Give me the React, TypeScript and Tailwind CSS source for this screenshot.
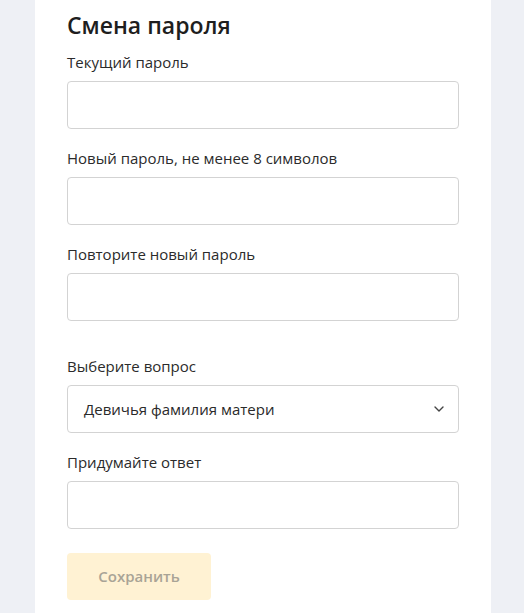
const fields = [
  { label: "Текущий пароль", type: "password" },
  { label: "Новый пароль, не менее 8 символов", type: "password" },
  { label: "Повторите новый пароль", type: "password" },
];

export default function App() {
  return (
    <div className="min-h-screen bg-[#eef0f5] font-['Open_Sans',sans-serif] text-[#1e1e1e]">
      <div className="ml-[35px] mr-[33px] bg-white pl-8 pr-[32px] pt-[10px] pb-[13px] min-h-[613px]">
        <h1 className="text-[23px] font-semibold leading-[30px]">Смена пароля</h1>

        <div className="mt-[12px] flex flex-col gap-[19px]">
          {fields.map((f) => (
            <label key={f.label} className="flex flex-col gap-[9px]">
              <span className="text-[15px] leading-[20px] text-[#2b2b2b]">{f.label}</span>
              <input
                type={f.type}
                className="h-[48px] w-full rounded-[4px] border border-[#d3d3d3] bg-white px-4 outline-none"
              />
            </label>
          ))}
        </div>

        <div className="mt-[35px] flex flex-col gap-[9px]">
          <span className="text-[15px] leading-[20px] text-[#2b2b2b]">Выберите вопрос</span>
          <div className="flex h-[48px] items-center justify-between rounded-[4px] border border-[#d3d3d3] pl-4 pr-[14px]">
            <span className="text-[15px] text-[#2a2a2a]">Девичья фамилия матери</span>
            <svg viewBox="0 0 10 6" className="h-[6px] w-[10px] text-[#444]" fill="none" stroke="currentColor" strokeWidth={1.4}>
              <path d="M1 1l4 4 4-4" strokeLinecap="round" strokeLinejoin="round" />
            </svg>
          </div>
        </div>

        <label className="mt-[19px] flex flex-col gap-[9px]">
          <span className="text-[15px] leading-[20px] text-[#2b2b2b]">Придумайте ответ</span>
          <input
            type="text"
            className="h-[48px] w-full rounded-[4px] border border-[#d3d3d3] bg-white px-4 outline-none"
          />
        </label>

        <button
          type="button"
          disabled
          className="mt-[24px] h-[47px] w-[144px] rounded-[4px] bg-[#fff2d3] text-[15px] font-semibold text-[#a9a496]"
        >
          Сохранить
        </button>
      </div>
    </div>
  );
}
